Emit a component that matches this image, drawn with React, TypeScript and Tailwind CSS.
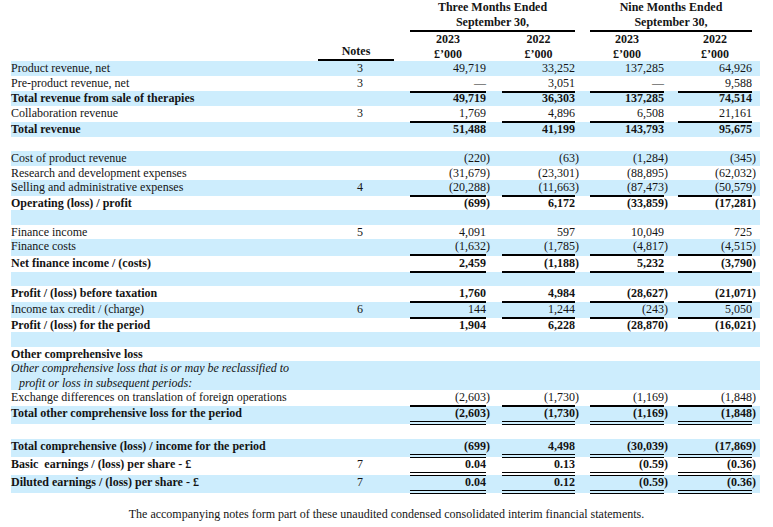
type Line = "single" | "double";

interface Row {
    label?: string;
    label2?: string;
    note?: string;
    values?: string[];
    h: number;
    blue?: boolean;
    bold?: boolean;
    italic?: boolean;
    line?: Line;
}

const rows: Row[] = [
    { label: "Product revenue, net", note: "3", values: ["49,719", "33,252", "137,285", "64,926"], h: 15, blue: true },
    { label: "Pre-product revenue, net", note: "3", values: ["—", "3,051", "—", "9,588"], h: 15, line: "single" },
    { label: "Total revenue from sale of therapies", values: ["49,719", "36,303", "137,285", "74,514"], h: 15, blue: true, bold: true },
    { label: "Collaboration revenue", note: "3", values: ["1,769", "4,896", "6,508", "21,161"], h: 16, line: "single" },
    { label: "Total revenue", values: ["51,488", "41,199", "143,793", "95,675"], h: 15, blue: true, bold: true },
    { h: 14 },
    { label: "Cost of product revenue", values: ["(220)", "(63)", "(1,284)", "(345)"], h: 15, blue: true },
    { label: "Research and development expenses", values: ["(31,679)", "(23,301)", "(88,895)", "(62,032)"], h: 14 },
    { label: "Selling and administrative expenses", note: "4", values: ["(20,288)", "(11,663)", "(87,473)", "(50,579)"], h: 16, blue: true, line: "single" },
    { label: "Operating (loss) / profit", values: ["(699)", "6,172", "(33,859)", "(17,281)"], h: 14, bold: true },
    { h: 15, blue: true },
    { label: "Finance income", note: "5", values: ["4,091", "597", "10,049", "725"], h: 14 },
    { label: "Finance costs", values: ["(1,632)", "(1,785)", "(4,817)", "(4,515)"], h: 17, blue: true, line: "single" },
    { label: "Net finance income / (costs)", values: ["2,459", "(1,188)", "5,232", "(3,790)"], h: 16, bold: true, line: "single" },
    { h: 14, blue: true },
    { label: "Profit / (loss) before taxation", values: ["1,760", "4,984", "(28,627)", "(21,071)"], h: 16, bold: true, line: "single" },
    { label: "Income tax credit / (charge)", note: "6", values: ["144", "1,244", "(243)", "5,050"], h: 16, blue: true, line: "single" },
    { label: "Profit / (loss) for the period", values: ["1,904", "6,228", "(28,870)", "(16,021)"], h: 14, bold: true },
    { h: 15, blue: true },
    { label: "Other comprehensive loss", h: 14, bold: true },
    {
        label: "Other comprehensive loss that is or may be reclassified to",
        label2: "profit or loss in subsequent periods:",
        h: 29,
        blue: true,
        italic: true,
    },
    { label: "Exchange differences on translation of foreign operations", values: ["(2,603)", "(1,730)", "(1,169)", "(1,848)"], h: 16, line: "single" },
    { label: "Total other comprehensive loss for the period", values: ["(2,603)", "(1,730)", "(1,169)", "(1,848)"], h: 18, blue: true, bold: true, line: "double" },
    { h: 15 },
    { label: "Total comprehensive (loss) / income for the period", values: ["(699)", "4,498", "(30,039)", "(17,869)"], h: 18, blue: true, bold: true, line: "double" },
    { label: "Basic  earnings / (loss) per share - £", note: "7", values: ["0.04", "0.13", "(0.59)", "(0.36)"], h: 18, bold: true, line: "double" },
    { label: "Diluted earnings / (loss) per share - £", note: "7", values: ["0.04", "0.12", "(0.59)", "(0.36)"], h: 18, blue: true, bold: true, line: "double" },
];

const grid = "grid grid-cols-[307px_76px_16px_76px_16px_73px_15px_74px_14px_74px_8px]";
const valueCols = ["col-start-4", "col-start-6", "col-start-8", "col-start-10"];

function ValueCell({ value, col, line }: { value: string; col: string; line?: Line }) {
    const paren = value.endsWith(")");
    const border = line === "single" ? "border-b-2 border-black" : line === "double" ? "border-b-4 border-double border-black" : "";

    return (
        <div className={`${col} row-start-1 flex justify-end items-start h-full ${border}`}>
            <span className={paren ? "-mr-1" : ""}>{value}</span>
        </div>
    );
}

function TableRow({ row }: { row: Row }) {
    return (
        <div
            style={{ height: row.h }}
            className={`${grid} ${row.blue ? "bg-[#cdedfd]" : ""} ${row.bold ? "font-bold" : ""}`}
        >
            <div className={`col-start-1 row-start-1 whitespace-pre ${row.italic ? "italic" : ""}`}>
                {row.label}
                {row.label2 && <div className="pl-2">{row.label2}</div>}
            </div>
            {row.note && (
                <div className="col-start-2 row-start-1 text-center pl-2 font-normal">{row.note}</div>
            )}
            {row.values?.map((value, index) => (
                <ValueCell key={index} value={value} col={valueCols[index]} line={row.line} />
            ))}
        </div>
    );
}

export default function App() {
    return (
        <div className="w-[773px] h-[527px] bg-white text-[#141414] text-[12px] leading-[15px] font-['Liberation_Serif',serif]">
            <div className="ml-[11px] w-[749px]">

                {/* Period headings */}
                <div className={`${grid} font-bold`}>
                    <div className="col-start-4 col-span-3 text-center border-b-2 border-black h-[32px]">
                        <div>Three Months Ended</div>
                        <div>September 30,</div>
                    </div>
                    <div className="col-start-8 col-span-3 text-center border-b-2 border-black h-[32px]">
                        <div>Nine Months Ended</div>
                        <div>September 30,</div>
                    </div>
                </div>

                {/* Year headings */}
                <div className={`${grid} font-bold h-[29px] leading-[14.5px]`}>
                    <div className="col-start-2 row-start-1 flex items-end justify-center border-b-2 border-black leading-[15px]">
                        Notes
                    </div>
                    {valueCols.map((col, index) => (
                        <div key={col} className={`${col} row-start-1 text-center`}>
                            <div>{index % 2 === 0 ? "2023" : "2022"}</div>
                            <div>£’000</div>
                        </div>
                    ))}
                </div>

                {rows.map((row, index) => (
                    <TableRow key={index} row={row} />
                ))}
            </div>

            <p className="mt-[14px] text-center">
                The accompanying notes form part of these unaudited condensed consolidated interim financial statements.
            </p>
        </div>
    );
}
